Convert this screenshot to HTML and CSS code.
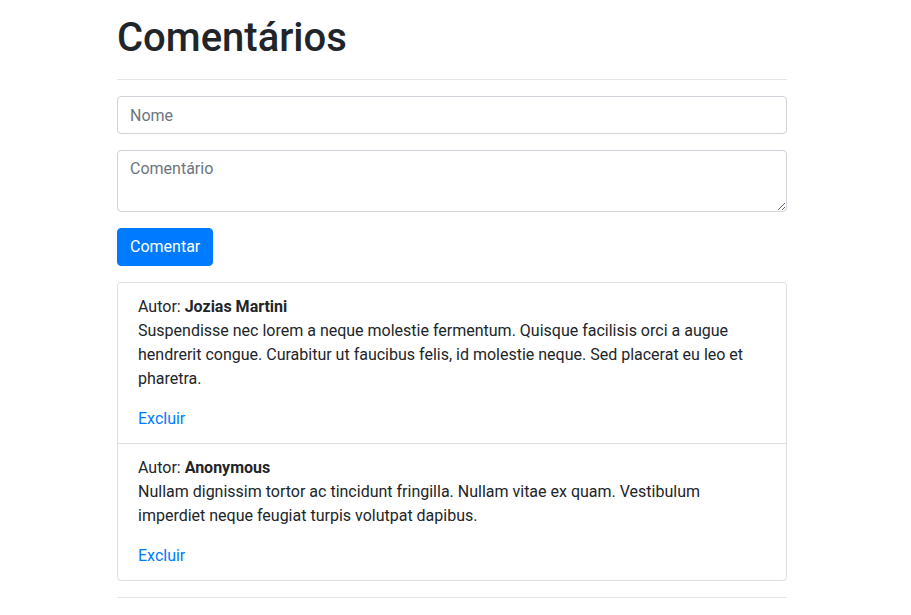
FILE: index.html
```html
<!DOCTYPE html>
<html lang="pt-BR">
<head>
<meta charset="utf-8">
<title>Comentários</title>
<link rel="stylesheet" href="styles.css">
</head>
<body>
<main class="page">
  <h1 class="title">Comentários</h1>
  <hr class="divider">
  <form class="comment-form">
    <div class="form-group">
      <input class="form-control" type="text" placeholder="Nome">
    </div>
    <div class="form-group">
      <textarea class="form-control textarea" rows="2" placeholder="Comentário"></textarea>
    </div>
    <button class="btn-primary" type="button">Comentar</button>
  </form>
  <ul class="list-group">
    <li class="list-group-item">
      <div class="author">Autor: <strong>Jozias Martini</strong></div>
      <p class="text">Suspendisse nec lorem a neque molestie fermentum. Quisque facilisis orci a augue hendrerit congue. Curabitur ut faucibus felis, id molestie neque. Sed placerat eu leo et pharetra.</p>
      <a class="link" href="#">Excluir</a>
    </li>
    <li class="list-group-item">
      <div class="author">Autor: <strong>Anonymous</strong></div>
      <p class="text">Nullam dignissim tortor ac tincidunt fringilla. Nullam vitae ex quam. Vestibulum imperdiet neque feugiat turpis volutpat dapibus.</p>
      <a class="link" href="#">Excluir</a>
    </li>
  </ul>
  <hr class="divider bottom">
</main>
</body>
</html>
```

FILE: styles.css
```css
* { box-sizing: border-box; }
html, body { margin: 0; padding: 0; background: #fff; }
body {
  font-family: Roboto, "Liberation Sans", Arial, sans-serif;
  font-size: 16px;
  line-height: 1.5;
  color: #212529;
}
.page {
  width: 670px;
  margin-left: 117px;
  padding-top: 14px;
}
.title {
  margin: 0 0 17px 0;
  font-size: 40px;
  font-weight: 500;
  line-height: 1.2;
}
.divider {
  margin: 0 0 16px 0;
  border: 0;
  border-top: 1px solid rgba(0,0,0,.1);
  height: 0;
}
.divider.bottom { margin-top: 16px; }
.form-group { margin-bottom: 16px; }
.form-control {
  display: block;
  width: 100%;
  height: 38px;
  padding: 6px 12px;
  font-family: inherit;
  font-size: 16px;
  line-height: 1.5;
  color: #495057;
  background: #fff;
  border: 1px solid #ced4da;
  border-radius: 4px;
  outline: none;
}
.form-control::placeholder { color: #6c757d; opacity: 1; }
.textarea { height: 62px; resize: vertical; }
.btn-primary {
  display: block;
  margin: 0 0 16px 0;
  padding: 6px 12px;
  font-family: inherit;
  font-size: 16px;
  line-height: 1.5;
  color: #fff;
  background: #007bff;
  border: 1px solid #007bff;
  border-radius: 4px;
}
.list-group {
  list-style: none;
  margin: 0;
  padding: 0;
  border: 1px solid rgba(0,0,0,.125);
  border-radius: 4px;
}
.list-group-item {
  padding: 12px 20px;
}
.list-group-item + .list-group-item {
  border-top: 1px solid rgba(0,0,0,.125);
}
.author strong { font-weight: 700; }
.text { margin: 0 0 16px 0; }
.link { color: #007bff; text-decoration: none; }
```
